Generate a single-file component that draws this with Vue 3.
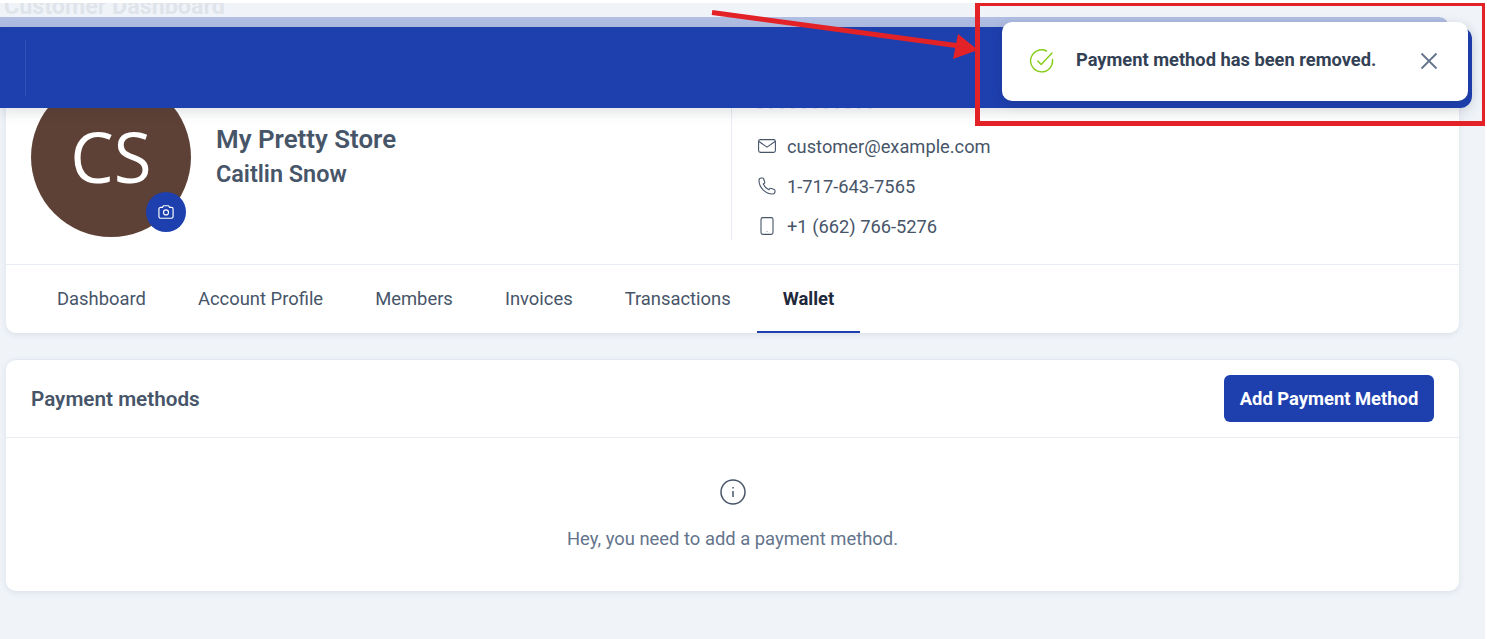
<template>
  <div class="page">
    <h1 class="page-title">Customer Dashboard</h1>

    <section class="card profile-card">
      <div class="profile-top">
        <div class="avatar">
          <span class="avatar-text">CS</span>
          <span class="avatar-cam">
            <svg width="20" height="20" viewBox="0 0 24 24" fill="none" stroke="#fff" stroke-width="1.4" stroke-linejoin="round">
              <path d="M3.5 8.5a2 2 0 0 1 2-2h2.2l1.2-2h6.2l1.2 2h2.2a2 2 0 0 1 2 2v9a2 2 0 0 1-2 2h-13a2 2 0 0 1-2-2z" />
              <circle cx="12" cy="12.5" r="3" />
            </svg>
          </span>
        </div>
        <div class="names">
          <div class="store">My Pretty Store</div>
          <div class="person">Caitlin Snow</div>
        </div>
        <ul class="contact">
          <li class="contact-ghost" />
          <li class="contact-row">
            <svg width="18" height="18" viewBox="0 0 18 18" fill="none" stroke="currentColor" stroke-width="1.1" stroke-linejoin="round">
              <rect x="0.6" y="2.6" width="16.8" height="12.8" rx="1.8" />
              <path d="M1 4.5l8 5.6 8-5.6" />
            </svg>
            customer@example.com
          </li>
          <li class="contact-row">
            <svg width="18" height="18" viewBox="0 0 18 18" fill="none" stroke="currentColor" stroke-width="1.1" stroke-linejoin="round">
              <path d="M3.5 1C2 1 1 2 1 3.5 1 10.5 7.5 17 14.5 17 16 17 17 16 17 14.5v-1c0-.5-.3-.9-.8-1.1L13 11.3c-.5-.2-1 0-1.3.4l-.7 1.100C8.500 11.700 6.300 9.500 5.200 7l1.100-.7c.4-.3.6-.8.4-1.300L5.600 1.800C5.400 1.300 5 1 4.500 1z" />
            </svg>
            1-717-643-7565
          </li>
          <li class="contact-row">
            <svg width="18" height="18" viewBox="0 0 18 18" fill="none" stroke="currentColor" stroke-width="1.1" stroke-linejoin="round">
              <rect x="3" y="0.6" width="12" height="16.8" rx="1.8" />
              <path d="M9 14.2v.6" />
            </svg>
            +1 (662) 766-5276
          </li>
        </ul>
      </div>
      <nav class="tabs">
        <a v-for="tab in tabs" :key="tab" class="tab" :class="{ active: tab === 'Wallet' }">{{ tab }}</a>
      </nav>
    </section>

    <section class="card wallet-card">
      <header class="wallet-head">
        <h2 class="wallet-title">Payment methods</h2>
        <button class="add-btn">Add Payment Method</button>
      </header>
      <div class="wallet-empty">
        <svg width="28" height="28" viewBox="0 0 28 28" fill="none" stroke="#475569" stroke-width="1.5">
          <circle cx="14" cy="14" r="12" />
          <path d="M14 13v6M14 9v1.4" />
        </svg>
        <p class="empty-text">Hey, you need to add a payment method.</p>
      </div>
    </section>

    <!-- 顶部固定栏，盖在卡片上面 -->
    <div class="sticky-bar">
      <div class="bar-ghost" />
      <div class="bar-main">
        <span class="bar-divider" />
      </div>
    </div>

    <!-- toast -->
    <div class="toast">
      <svg width="26" height="26" viewBox="0 0 26 26" fill="none" stroke="#84cc16" stroke-width="1.4" stroke-linecap="round" stroke-linejoin="round">
        <path d="M23.5 11.5A11 11 0 1 1 17.5 3" />
        <path d="M8.8 13l3.400 3.400L23 5" />
      </svg>
      <span class="toast-text">Payment method has been removed.</span>
      <svg class="toast-close" width="18" height="18" viewBox="0 0 18 18" fill="none" stroke="#64748b" stroke-width="1.8">
        <path d="M1.5 1.5l15 15M16.500 1.500l-15 15" />
      </svg>
    </div>

    <!-- annotation -->
    <svg class="annotation" width="1487" height="639" viewBox="0 0 1487 639" fill="none">
      <rect x="977.5" y="3.5" width="507" height="120" stroke="#e32227" stroke-width="5" />
      <path d="M712 12.5L960 46" stroke="#e32227" stroke-width="5" />
      <path d="M958 34L978 50L953 59z" fill="#e32227" />
    </svg>
  </div>
</template>

<script setup>
const tabs = ['Dashboard', 'Account Profile', 'Members', 'Invoices', 'Transactions', 'Wallet']
</script>

<style>
html, body {
  margin: 0;
  background: #fff;
  overflow: hidden;
}
</style>

<style scoped>
.page {
  position: relative;
  width: 1485px;
  height: 636px;
  margin-top: 3px;
  padding: 0 26px 0 6px;
  box-sizing: border-box;
  background: #f0f4f9;
  font-family: Roboto, "Liberation Sans", sans-serif;
  overflow: hidden;
}

.page-title {
  margin: -10px 0 0 -2px;
  font-size: 23.3px;
  line-height: 26px;
  font-weight: 700;
  color: #dfe4ea;
}

.card {
  background: #fff;
  border-radius: 10px;
  box-shadow: 0 2px 6px rgba(51, 65, 85, 0.1);
}

/* ---- profile ---- */
.profile-card {
  margin-top: 33px;
}

.profile-top {
  display: flex;
  align-items: flex-start;
  height: 213px;
  padding: 25px 0 0 25px;
  box-sizing: border-box;
  border-bottom: 1px solid #e8edf3;
}

.avatar {
  position: relative;
  width: 160px;
  height: 160px;
  flex-shrink: 0;
  display: flex;
  align-items: center;
  justify-content: center;
  border-radius: 50%;
  background: #5e4136;
}

.avatar-text {
  padding-bottom: 2px;
  font-family: "Open Sans", sans-serif;
  font-size: 69px;
  color: #fff;
}

.avatar-cam {
  position: absolute;
  right: 5px;
  bottom: 5px;
  width: 40px;
  height: 40px;
  display: flex;
  align-items: center;
  justify-content: center;
  border-radius: 50%;
  background: #1e40af;
}

.names {
  width: 540px;
  padding: 46px 0 0 25px;
  flex-shrink: 0;
  box-sizing: border-box;
  color: #475569;
}

.store {
  font-size: 25.9px;
  line-height: 32px;
  font-weight: 600;
}

.person {
  font-size: 23.4px;
  line-height: 38px;
  font-weight: 600;
}

.contact {
  list-style: none;
  margin: 0;
  padding: 30px 0 0 26px;
  border-left: 1px solid #e8edf3;
  height: 163px;
  box-sizing: border-box;
  color: #475569;
}

.contact-ghost {
  width: 120px;
  height: 2px;
  margin-bottom: 17px;
  background: repeating-linear-gradient(90deg, #e8eaee 0 4px, transparent 4px 11px);
}

.contact-row {
  display: flex;
  align-items: center;
  gap: 11px;
  height: 40px;
  font-size: 18.3px;
}

/* ---- tabs ---- */
.tabs {
  display: flex;
  height: 68px;
  padding-left: 25px;
}

.tab {
  display: flex;
  align-items: center;
  padding: 0 26px;
  font-size: 18.4px;
  color: #475569;
  box-sizing: border-box;
  border-bottom: 2px solid transparent;
}

.tab.active {
  font-weight: 700;
  color: #1e293b;
  border-bottom-color: #1e40af;
}

/* ---- wallet ---- */
.wallet-card {
  margin-top: 26px;
  border-top: 1px solid #e2e8f0;
}

.wallet-head {
  display: flex;
  align-items: center;
  justify-content: space-between;
  height: 77px;
  padding: 0 25px;
  border-bottom: 1px solid #e8edf3;
}

.wallet-title {
  margin: 0;
  font-size: 20.7px;
  font-weight: 600;
  color: #475569;
}

.add-btn {
  width: 210px;
  height: 47px;
  padding: 0;
  border: 0;
  border-radius: 6px;
  background: #1e40af;
  color: #fff;
  font-family: inherit;
  font-size: 18.4px;
  font-weight: 700;
}

.wallet-empty {
  display: flex;
  flex-direction: column;
  align-items: center;
  height: 153px;
  padding-top: 40px;
  box-sizing: border-box;
}

.empty-text {
  margin: 22px 0 0;
  font-size: 18.4px;
  color: #64748b;
}

/* ---- overlays ---- */
.sticky-bar {
  position: absolute;
  top: 14px;
  left: 0;
  width: 1472px;
}

.bar-ghost {
  width: 1449px;
  height: 10px;
  border-radius: 0 12px 0 0;
  background: #b0bee3;
}

.bar-main {
  display: flex;
  align-items: center;
  height: 81px;
  padding-left: 25px;
  box-sizing: border-box;
  border-radius: 0 12px 12px 0;
  background: #1e40af;
  box-shadow: 0 4px 14px rgba(30, 41, 59, 0.14);
}

.bar-divider {
  width: 1px;
  height: 56px;
  background: #3152b9;
}

.toast {
  position: absolute;
  top: 19px;
  left: 1002px;
  width: 466px;
  height: 79px;
  padding: 0 30px 1px 27px;
  box-sizing: border-box;
  display: flex;
  align-items: center;
  gap: 21px;
  background: #fff;
  border-radius: 10px;
  box-shadow: 0 3px 12px rgba(15, 23, 42, 0.15);
}

.toast-text {
  flex: 1;
  padding-bottom: 3px;
  font-size: 18.3px;
  font-weight: 700;
  color: #334155;
}

.annotation {
  position: absolute;
  top: -3px;
  left: 0;
  pointer-events: none;
}
</style>
